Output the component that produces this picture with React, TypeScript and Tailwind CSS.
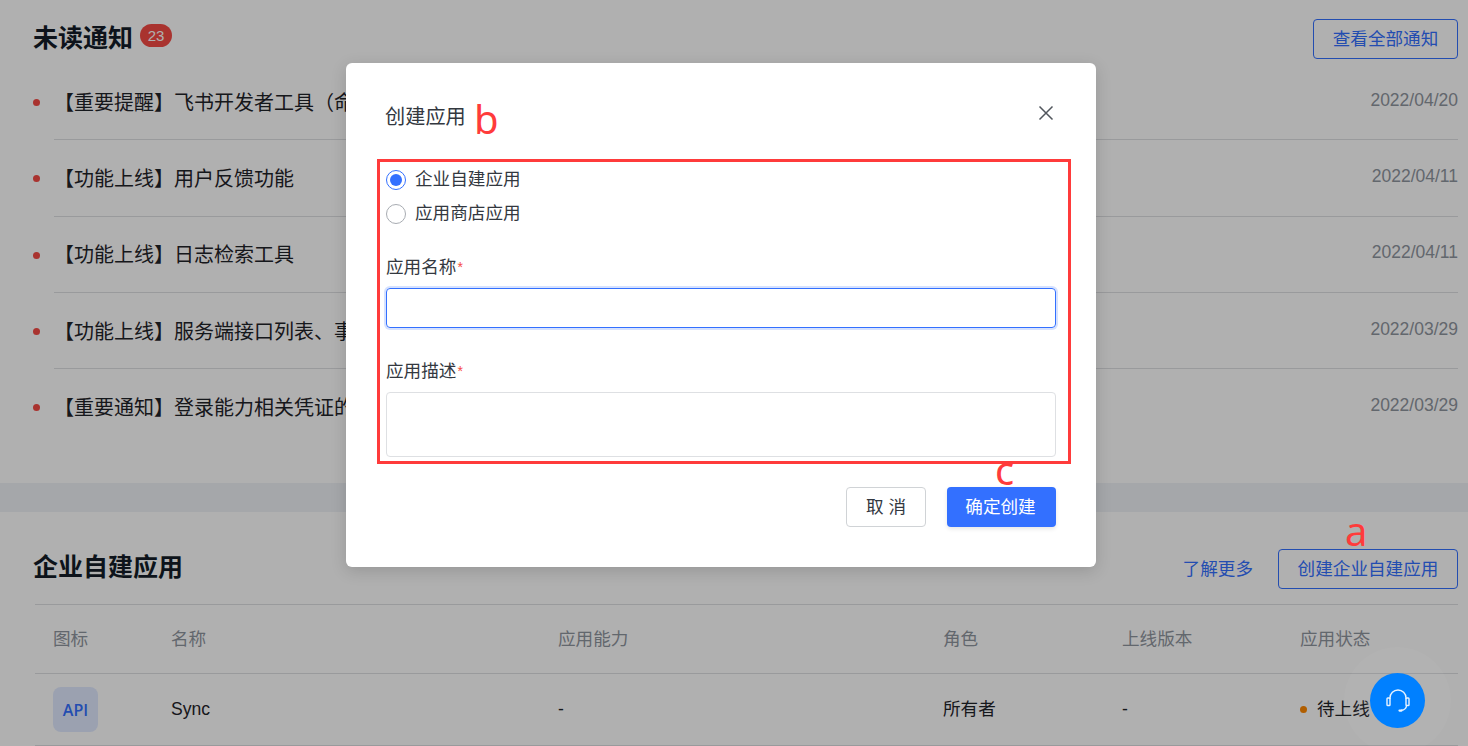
import React from "react";

const notices = [
  { t: "【重要提醒】飞书开发者工具（命令行版）更新通知", d: "2022/04/20" },
  { t: "【功能上线】用户反馈功能", d: "2022/04/11" },
  { t: "【功能上线】日志检索工具", d: "2022/04/11" },
  { t: "【功能上线】服务端接口列表、事件列表", d: "2022/03/29" },
  { t: "【重要通知】登录能力相关凭证的变更通知", d: "2022/03/29" },
];

function Required({ children }: { children: React.ReactNode }) {
  return (
    <div className="h-[24px] flex items-center text-[17.6px] text-[#33383f]">
      {children}
      <span className="text-[#f54a45] text-[14px] ml-[1px]">*</span>
    </div>
  );
}

export default function App() {
  return (
    <div
      className="relative h-[746px] w-[1468px] overflow-hidden bg-white"
      style={{ fontFamily: '"Liberation Sans","Noto Sans CJK SC",sans-serif' }}
    >
      <section className="h-[483px] pl-[33px] pr-[10px] pt-[19px]">
        <div className="flex items-start justify-between h-[40px]">
          <div className="flex items-start">
            <h2 className="mt-[3px] text-[25px] leading-[32px] font-bold text-[#131c28]">未读通知</h2>
            <span className="ml-[7px] mt-[5px] h-[23px] w-[32px] rounded-[12px] bg-[#f54a45] text-white text-[15px] leading-[23px] text-center">23</span>
          </div>
          <button className="h-[40px] w-[145px] rounded-[4px] border border-[#3370ff] text-[#3370ff] text-[17.6px]">查看全部通知</button>
        </div>
        <ul className="mt-[5px]">
          {notices.map((n, i) => (
            <li key={i} className="flex h-[76.3px] pt-[2px]">
              <span className="mt-[33px] h-[7px] w-[7px] rounded-full bg-[#f54a45] shrink-0" />
              <div className={`ml-[14px] flex-1 flex justify-between pt-[22.7px] ${i < 4 ? "border-b border-[#dee0e3]" : ""}`}>
                <span className="text-[20px] leading-[28px] text-[#1f2329]">{n.t}</span>
                <span className="text-[17.5px] leading-[24px] text-[#8f959e] -mt-[1px]">{n.d}</span>
              </div>
            </li>
          ))}
        </ul>
      </section>

      <div className="h-[29px] bg-[#f0f2f7]" />

      <section className="pl-[33px] pr-[10px] pt-[37px]">
        <div className="flex items-center justify-between h-[40px]">
          <h2 className="-mt-[2px] text-[25px] font-bold text-[#131c28]">企业自建应用</h2>
          <div className="flex items-center gap-[25px]">
            <a className="text-[17.6px] text-[#3370ff]">了解更多</a>
            <button className="h-[40px] w-[180px] rounded-[4px] border border-[#3370ff] text-[#3370ff] text-[17.6px]">创建企业自建应用</button>
          </div>
        </div>
        <div className="ml-[2px] mt-[15px] border-t border-[#dee0e3]">
          <div className="grid grid-cols-[118px_387px_385px_179px_178px_1fr] h-[69px] items-center pl-[18px] border-b border-[#dee0e3] text-[17.6px] text-[#8f959e]">
            <span>图标</span>
            <span>名称</span>
            <span>应用能力</span>
            <span>角色</span>
            <span>上线版本</span>
            <span>应用状态</span>
          </div>
          <div className="grid grid-cols-[118px_387px_385px_179px_178px_1fr] h-[72px] items-center pl-[18px] border-b border-[#dee0e3] text-[17.6px] text-[#1f2329]">
            <span className="h-[45px] w-[45px] rounded-[8px] bg-[#e1eaff] flex items-center justify-center text-[#3370ff] text-[16px] font-semibold" style={{ fontFamily: '"Open Sans",sans-serif' }}>API</span>
            <span>Sync</span>
            <span>-</span>
            <span>所有者</span>
            <span>-</span>
            <span className="flex items-center">
              <span className="h-[7px] w-[7px] rounded-full bg-[#ff8800] mr-[10px]" />
              待上线
            </span>
          </div>
        </div>
      </section>

      <div className="absolute inset-0 bg-black/31" />

      <div className="absolute left-[1370px] top-[673px] h-[55px] w-[55px] rounded-full bg-[#0080ff] flex items-center justify-center shadow-[0_0_0_26px_rgba(255,255,255,0.03)]">
        <svg width="26" height="26" viewBox="0 0 26 26" fill="none" stroke="#e8f3ff" strokeWidth="1.4" strokeLinecap="round" strokeLinejoin="round">
          <path d="M5 10.5V10a8 8 0 0 1 16 0v.5" />
          <rect x="2" y="10" width="3" height="7.5" rx="0.8" />
          <rect x="21" y="10" width="3" height="7.5" rx="0.8" />
          <path d="M21.5 17.5c0 2.6-2.4 4.5-5 4.8" />
          <path d="M14.5 22.6h2" strokeWidth="2.2" />
        </svg>
      </div>

      <div className="absolute left-[346px] top-[63px] h-[504px] w-[750px] rounded-[6px] bg-white shadow-[0_4px_16px_rgba(0,0,0,0.15)] pl-[40px] pr-[40px] pt-[38px]">
        <div className="flex items-center justify-between h-[30px]">
          <h3 className="-ml-[1px] mt-[2px] text-[20.2px] text-[#33383f]">创建应用</h3>
          <svg className="-mt-[6px] mr-[1px]" width="18" height="18" viewBox="0 0 18 18" fill="none" stroke="#51565d" strokeWidth="1.5">
            <path d="M2.5 2.5l13 13M15.5 2.5l-13 13" />
          </svg>
        </div>

        <div className="mt-[36px] flex flex-col gap-[10px]">
          <label className="flex items-center h-[24px] text-[17.6px] text-[#33383f]">
            <span className="h-[20px] w-[20px] mt-[2px] rounded-full border border-[#3370ff] flex items-center justify-center mr-[10px]">
              <span className="h-[12px] w-[12px] rounded-full bg-[#3370ff]" />
            </span>
            <span className="-ml-[1px]">企业自建应用</span>
          </label>
          <label className="flex items-center h-[24px] text-[17.6px] text-[#33383f]">
            <span className="h-[20px] w-[20px] mt-[2px] rounded-full border border-[#a8acb2] mr-[10px]" />
            <span className="-ml-[1px]">应用商店应用</span>
          </label>
        </div>

        <div className="mt-[30px]">
          <Required>应用名称</Required>
          <div className="mt-[9px] h-[40px] w-[670px] rounded-[4px] border border-[#3370ff] shadow-[0_0_0_2px_rgba(51,112,255,0.2)]" />
        </div>
        <div className="mt-[31px]">
          <Required>应用描述</Required>
          <div className="mt-[9px] h-[65px] w-[670px] rounded-[4px] border border-[#dee0e3]" />
        </div>

        <div className="mt-[30px] flex justify-end gap-[21px]">
          <button className="h-[40px] w-[80px] rounded-[4px] border border-[#d0d3d6] text-[17.6px] text-[#33383f] tracking-[5px] pl-[5px]">取消</button>
          <button className="h-[40px] w-[109px] rounded-[4px] bg-[#3370ff] text-[17.6px] text-white pr-[2px] shadow-[0_2px_4px_rgba(0,0,0,0.1)]">确定创建</button>
        </div>

        <div className="absolute left-[31px] top-[96px] h-[305px] w-[694px] border-[3px] border-[#ff3b3b]" />
        <span className="absolute left-[128px] top-[33px] text-[40px] leading-[46px] text-[#ff3b3b] font-['Noto_Sans']">b</span>
        <span className="absolute left-[649px] top-[384px] text-[40px] leading-[46px] text-[#ff3b3b] font-['Noto_Sans']">c</span>
      </div>

      <span className="absolute left-[1345px] top-[508px] text-[40px] leading-[46px] text-[#ff3b3b] font-['Noto_Sans']">a</span>
    </div>
  );
}
